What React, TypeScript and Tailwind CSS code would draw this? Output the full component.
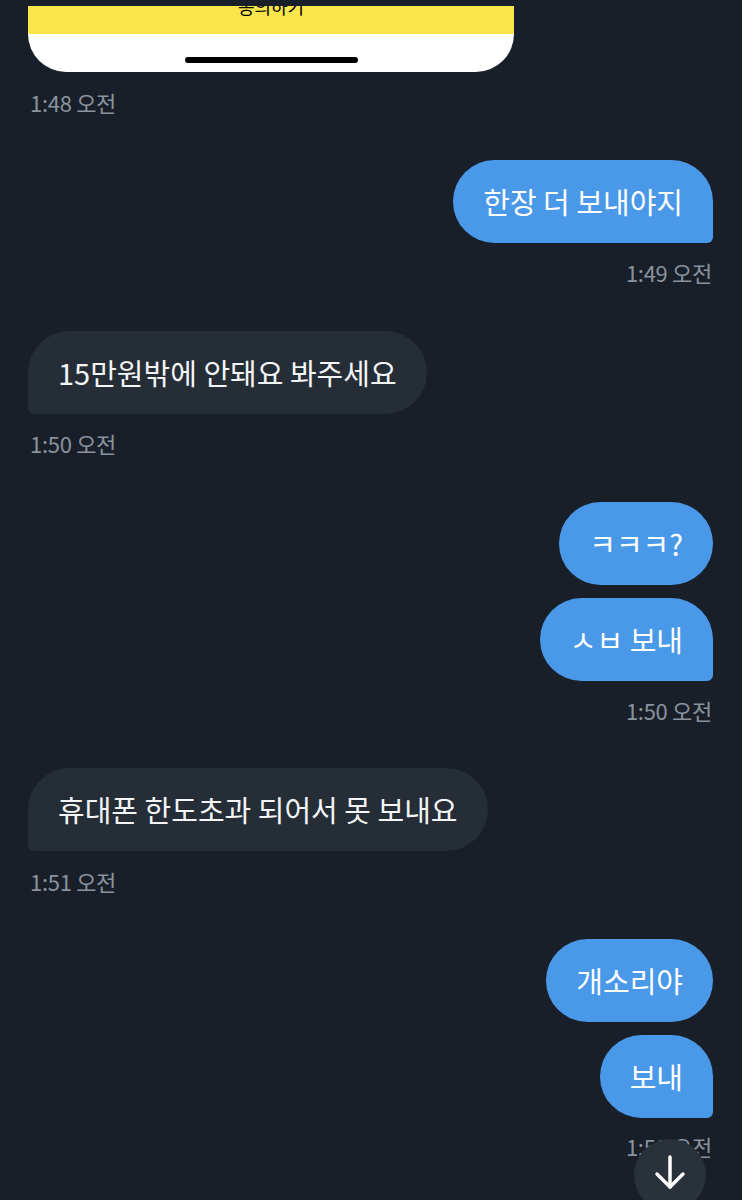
import React from "react";

const font = { fontFamily: '"Noto Sans CJK KR", "Noto Sans", sans-serif' };

function Stamp({ text, right, mt }: { text: string; right?: boolean; mt: string }) {
  return (
    <div
      className={`${mt} text-[22px] leading-[24px] text-[#8a939d] tracking-[-0.3px] ${right ? "self-end pr-[30px]" : "self-start pl-[30px]"}`}
    >
      {text}
    </div>
  );
}

function Mine({ text, tail, mt }: { text: string; tail: boolean; mt: string }) {
  return (
    <div
      className={`${mt} self-end mr-[29px] bg-[#4a99e8] text-white text-[29px] leading-[35px] py-[24px] px-[30px] ${tail ? "rounded-[42px] rounded-br-[6px]" : "rounded-[42px]"}`}
    >
      {text}
    </div>
  );
}

function Theirs({ text, mt }: { text: string; mt: string }) {
  return (
    <div
      className={`${mt} self-start ml-[28px] bg-[#252d36] text-[#f3f5f7] text-[29px] leading-[35px] py-[24px] px-[30px] rounded-[42px] rounded-bl-[6px]`}
    >
      {text}
    </div>
  );
}

export default function App() {
  return (
    <div className="relative w-[742px] h-[1200px] overflow-hidden bg-[#181f29]" style={font}>
      <div className="flex flex-col pt-[6px]">
        <div className="ml-[28px] w-[486px] rounded-b-[38px] overflow-hidden bg-white">
          <div className="h-[28px] bg-[#fbe54d] overflow-hidden flex justify-center">
            <div className="mt-[-9px] text-[18px] leading-[18px] text-black">동의하기</div>
          </div>
          <div className="h-[38px] flex justify-center pt-[23px]">
            <div className="w-[173px] h-[6px] rounded-full bg-black" />
          </div>
        </div>
        <Stamp text="1:48 오전" mt="mt-[18px]" />
        <Mine text="한장 더 보내야지" tail mt="mt-[46px]" />
        <Stamp text="1:49 오전" right mt="mt-[17px]" />
        <Theirs text="15만원밖에 안돼요 봐주세요" mt="mt-[47px]" />
        <Stamp text="1:50 오전" mt="mt-[17px]" />
        <Mine text="ㅋㅋㅋ?" tail={false} mt="mt-[47px]" />
        <Mine text="ㅅㅂ 보내" tail mt="mt-[13px]" />
        <Stamp text="1:50 오전" right mt="mt-[17px]" />
        <Theirs text="휴대폰 한도초과 되어서 못 보내요" mt="mt-[46px]" />
        <Stamp text="1:51 오전" mt="mt-[18px]" />
        <Mine text="개소리야" tail={false} mt="mt-[46px]" />
        <Mine text="보내" tail mt="mt-[13px]" />
        <Stamp text="1:50 오전" right mt="mt-[16px]" />
      </div>
      <div className="absolute left-[634px] top-[1139px] w-[72px] h-[72px] rounded-full bg-[#29313b] flex items-center justify-center">
        <svg width="40" height="40" viewBox="0 0 40 40" fill="none" stroke="white" strokeWidth="3.5" strokeLinecap="round" strokeLinejoin="round" className="-mt-[4px]">
          <path d="M20 4v30" />
          <path d="M7 21l13 13 13-13" />
        </svg>
      </div>
    </div>
  );
}
